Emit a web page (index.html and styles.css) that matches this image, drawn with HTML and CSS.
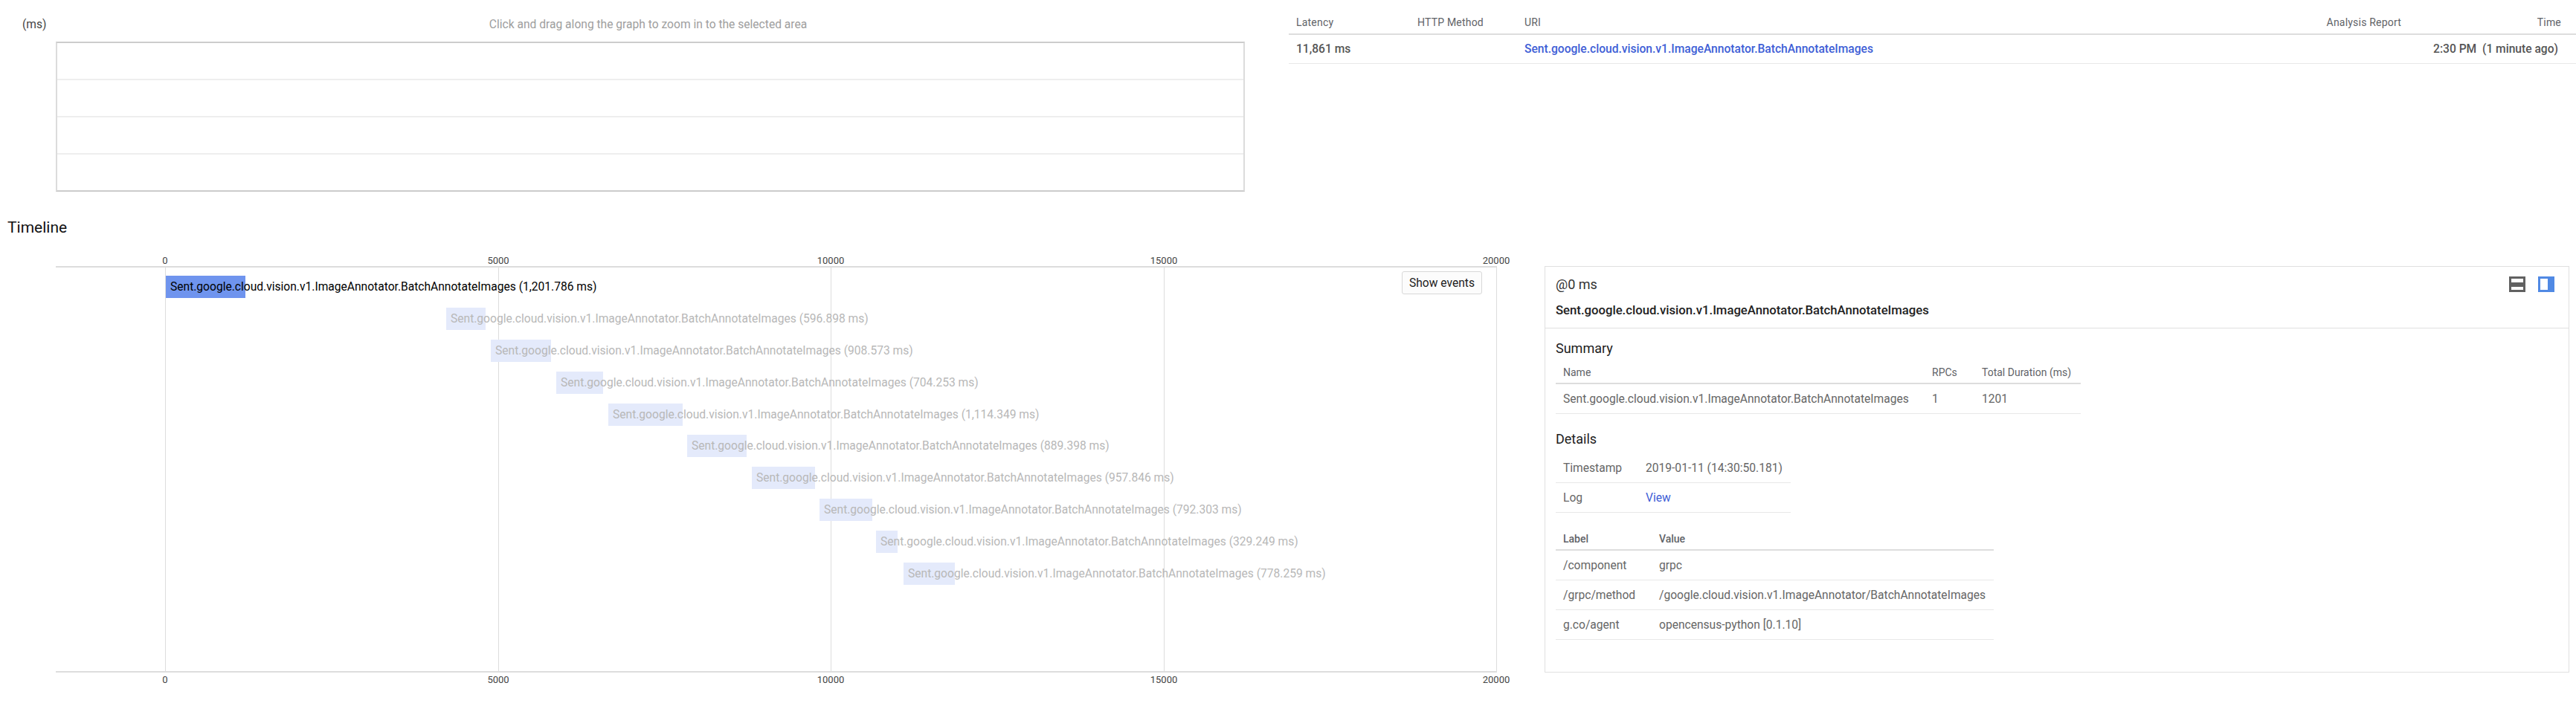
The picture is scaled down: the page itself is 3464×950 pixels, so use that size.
FILE: index.html
```html
<!DOCTYPE html>
<html lang="en">
<head>
<meta charset="utf-8">
<title>Trace details</title>
<link rel="stylesheet" href="styles.css">
</head>
<body>
<div class="top">
  <div class="graph">
    <div class="graph-head">
      <span class="unit">(ms)</span>
      <span class="hint">Click and drag along the graph to zoom in to the selected area</span>
    </div>
    <div class="plot">
      <div class="plot-row"></div>
      <div class="plot-row"></div>
      <div class="plot-row"></div>
      <div class="plot-row"></div>
    </div>
  </div>
  <table class="results">
    <colgroup><col class="c-lat"><col class="c-http"><col class="c-uri"><col class="c-report"><col class="c-time"></colgroup>
    <thead><tr><th>Latency</th><th>HTTP Method</th><th>URI</th><th class="right">Analysis Report</th><th class="right time-head">Time</th></tr></thead>
    <tbody><tr><td>11,861 ms</td><td></td><td><a class="link" href="#">Sent.google.cloud.vision.v1.ImageAnnotator.BatchAnnotateImages</a></td><td></td><td class="right when">2:30 PM&nbsp; (1 minute ago)</td></tr></tbody>
  </table>
</div>
<h2 class="section-title">Timeline</h2>
<div class="lower">
  <div class="timeline">
    <div class="tick" style="left:147px"><span class="tick-top">0</span><span class="tick-bottom">0</span></div>
    <div class="tick" style="left:595px"><span class="tick-top">5000</span><span class="tick-bottom">5000</span></div>
    <div class="tick" style="left:1042px"><span class="tick-top">10000</span><span class="tick-bottom">10000</span></div>
    <div class="tick" style="left:1490px"><span class="tick-top">15000</span><span class="tick-bottom">15000</span></div>
    <div class="tick" style="left:1937px"><span class="tick-top">20000</span><span class="tick-bottom">20000</span></div>
    <button class="events">Show events</button>
    <div class="rows">
      <div class="row"><div class="bar active" style="margin-left:148px;width:107px"><span>Sent.google.cloud.vision.v1.ImageAnnotator.BatchAnnotateImages (1,201.786 ms)</span></div></div>
      <div class="row"><div class="bar" style="margin-left:525px;width:53px"><span>Sent.google.cloud.vision.v1.ImageAnnotator.BatchAnnotateImages (596.898 ms)</span></div></div>
      <div class="row"><div class="bar" style="margin-left:585px;width:81px"><span>Sent.google.cloud.vision.v1.ImageAnnotator.BatchAnnotateImages (908.573 ms)</span></div></div>
      <div class="row"><div class="bar" style="margin-left:673px;width:63px"><span>Sent.google.cloud.vision.v1.ImageAnnotator.BatchAnnotateImages (704.253 ms)</span></div></div>
      <div class="row"><div class="bar" style="margin-left:743px;width:100px"><span>Sent.google.cloud.vision.v1.ImageAnnotator.BatchAnnotateImages (1,114.349 ms)</span></div></div>
      <div class="row"><div class="bar" style="margin-left:849px;width:80px"><span>Sent.google.cloud.vision.v1.ImageAnnotator.BatchAnnotateImages (889.398 ms)</span></div></div>
      <div class="row"><div class="bar" style="margin-left:936px;width:85px"><span>Sent.google.cloud.vision.v1.ImageAnnotator.BatchAnnotateImages (957.846 ms)</span></div></div>
      <div class="row"><div class="bar" style="margin-left:1027px;width:71px"><span>Sent.google.cloud.vision.v1.ImageAnnotator.BatchAnnotateImages (792.303 ms)</span></div></div>
      <div class="row"><div class="bar" style="margin-left:1103px;width:29px"><span>Sent.google.cloud.vision.v1.ImageAnnotator.BatchAnnotateImages (329.249 ms)</span></div></div>
      <div class="row"><div class="bar" style="margin-left:1140px;width:69px"><span>Sent.google.cloud.vision.v1.ImageAnnotator.BatchAnnotateImages (778.259 ms)</span></div></div>
    </div>
  </div>
  <div class="details">
    <div class="details-head">
      <div class="offset-row">
        <span class="offset">@0 ms</span>
        <div class="icons">
          <svg class="icon" width="22" height="21" viewBox="0 0 22 21"><rect width="22" height="21" fill="#616161"/><rect x="3" y="3" width="16" height="5" fill="#fff"/><rect x="3" y="14" width="16" height="4" fill="#fff"/></svg>
          <svg class="icon" width="22" height="21" viewBox="0 0 22 21"><rect width="22" height="21" fill="#5089e4"/><rect x="3" y="3" width="10" height="15" fill="#fff"/></svg>
        </div>
      </div>
      <div class="span-name">Sent.google.cloud.vision.v1.ImageAnnotator.BatchAnnotateImages</div>
    </div>
    <div class="details-body">
      <h3 class="sub first">Summary</h3>
      <table class="data summary">
        <colgroup><col class="s-name"><col class="s-rpc"><col class="s-total"></colgroup>
        <thead><tr><th>Name</th><th>RPCs</th><th>Total Duration (ms)</th></tr></thead>
        <tbody><tr><td>Sent.google.cloud.vision.v1.ImageAnnotator.BatchAnnotateImages</td><td>1</td><td>1201</td></tr></tbody>
      </table>
      <h3 class="sub">Details</h3>
      <table class="data info">
        <colgroup><col class="i-key"><col class="i-val"></colgroup>
        <tbody>
          <tr><td>Timestamp</td><td>2019-01-11 (14:30:50.181)</td></tr>
          <tr><td>Log</td><td><a class="view" href="#">View</a></td></tr>
        </tbody>
      </table>
      <table class="data labels">
        <colgroup><col class="l-key"><col class="l-val"></colgroup>
        <thead><tr><th>Label</th><th>Value</th></tr></thead>
        <tbody>
          <tr><td>/component</td><td>grpc</td></tr>
          <tr><td>/grpc/method</td><td>/google.cloud.vision.v1.ImageAnnotator/BatchAnnotateImages</td></tr>
          <tr><td>g.co/agent</td><td>opencensus-python [0.1.10]</td></tr>
        </tbody>
      </table>
    </div>
  </div>
</div>
</body>
</html>
```

FILE: styles.css
```css
* { box-sizing: border-box; }
html, body { margin: 0; padding: 0; background: #fff; }
body {
  width: 3464px;
  height: 950px;
  overflow: hidden;
  font-family: Roboto, "Liberation Sans", sans-serif;
  font-size: 15.6px;
  color: #212121;
}

.top { display: flex; height: 280px; }

.graph { width: 1674px; flex: none; }
.graph-head {
  position: relative;
  display: flex;
  justify-content: center;
  height: 56px;
  padding: 23px 6px 0 75px;
  line-height: 20px;
}
.unit { position: absolute; left: 30px; color: #444; }
.hint { color: #9e9e9e; }

.plot {
  margin-left: 75px;
  height: 202px;
  display: flex;
  flex-direction: column;
  border: 2px solid #dcdcdc;
  border-top-color: #ccc;
  border-bottom-color: #ccc;
}
.plot-row { flex: 1; border-top: 2px solid #eee; }
.plot-row:first-child { border-top: 0; }

.results {
  flex: none;
  width: 1731px;
  margin: 15px 0 0 59px;
  table-layout: fixed;
  border-collapse: separate;
  border-spacing: 0;
  align-self: flex-start;
}
.c-lat { width: 163px; }
.c-http { width: 144px; }
.c-uri { width: 1071px; }
.c-report { width: 128px; }
.c-time { width: 225px; }
.results th {
  height: 32px;
  padding: 0 10px 1px;
  text-align: left;
  font-size: 14px;
  font-weight: 400;
  letter-spacing: .2px;
  color: #5f6368;
  border-bottom: 2px solid #ddd;
}
.results td {
  height: 39px;
  padding: 0 10px;
  font-weight: 500;
  color: #555;
  border-bottom: 1px solid #e8e8e8;
}
.results .right { text-align: right; }
.results .time-head { padding-right: 20px; }
.results .when { padding-right: 24px; }
.link { color: #3e5ed6; text-decoration: none; }

.section-title {
  margin: 0;
  padding-left: 10px;
  height: 52px;
  line-height: 52px;
  font-size: 21px;
  font-weight: 400;
  color: #111;
}

.lower { display: flex; padding-top: 26px; }

.timeline {
  position: relative;
  flex: none;
  width: 1938px;
  height: 547px;
  margin-left: 75px;
  border-top: 2px solid #ddd;
  border-bottom: 2px solid #ddd;
}
.tick {
  position: absolute;
  top: 0;
  bottom: 0;
  width: 1px;
  background: #ddd;
}
.tick span {
  position: absolute;
  left: 0;
  transform: translateX(-50%);
  font-size: 13px;
  line-height: 16px;
  color: #444;
}
.tick-top { top: -17px; }
.tick-bottom { bottom: -20px; }

.events {
  position: absolute;
  top: 5px;
  right: 20px;
  width: 108px;
  height: 31px;
  padding: 0;
  font: 400 15.6px Roboto, "Liberation Sans", sans-serif;
  color: #212121;
  background: #fcfcfc;
  border: 1px solid #d8d8d8;
  border-radius: 3px;
  z-index: 2;
}

.rows { position: relative; padding-top: 11px; }
.row { height: 42.9px; }
.bar {
  height: 30px;
  padding-left: 6px;
  line-height: 30px;
  white-space: nowrap;
  background: #e4eafb;
  color: #b8b8b8;
}
.bar.active { background: #6f94ee; color: #000; }

.details {
  flex: none;
  width: 1378px;
  height: 547px;
  margin-left: 64px;
  border: 1px solid #e0e0e0;
}
.details-head {
  height: 83px;
  padding: 11px 19px 0 14px;
  border-bottom: 1px solid #e0e0e0;
}
.offset-row { display: flex; justify-content: space-between; align-items: center; height: 24px; }
.offset { font-size: 18px; color: #333; }
.icons { display: flex; gap: 17px; }
.icon { display: block; }
.span-name { margin-top: 12px; line-height: 24px; font-size: 16.7px; font-weight: 500; color: #212121; }

.details-body { padding: 0 14px; }
.sub { margin: 22px 0 7px; line-height: 24px; font-size: 18px; font-weight: 400; color: #212121; }
.sub.first { margin: 15px 0 5px; }

.data { table-layout: fixed; border-collapse: separate; border-spacing: 0; }
.data th {
  height: 31px;
  padding: 0 10px;
  text-align: left;
  font-size: 14px;
  font-weight: 400;
  color: #5f6368;
  border-bottom: 2px solid #ddd;
}
.data td {
  height: 40px;
  padding: 0 10px;
  color: #666;
  border-bottom: 1px solid #e8e8e8;
  white-space: nowrap;
}
.summary { width: 706px; }
.s-name { width: 496px; }
.s-rpc { width: 67px; }
.s-total { width: 143px; }
.info { width: 316px; }
.i-key { width: 111px; }
.i-val { width: 205px; }
.labels { width: 589px; margin-top: 20px; }
.labels th { font-weight: 500; }
.l-key { width: 129px; }
.l-val { width: 460px; }
.view { color: #3e5ed6; text-decoration: none; }
```
